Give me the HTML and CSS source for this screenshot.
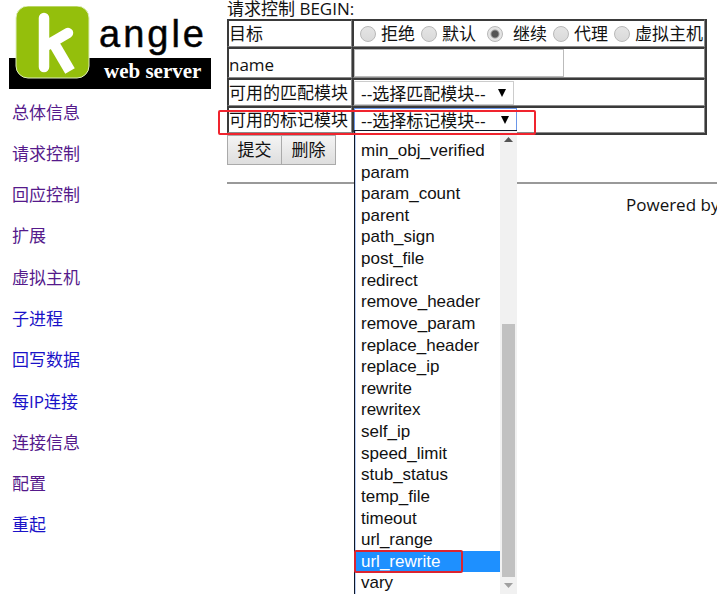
FILE: index.html
```html
<!DOCTYPE html>
<html lang="zh-CN">
<head>
<meta charset="utf-8">
<title>kangle web server</title>
<link rel="stylesheet" href="styles.css">
</head>
<body>
<div class="page">
  <aside class="sidebar">
    <svg class="logo" viewBox="0 0 202 84" role="img" aria-label="kangle web server">
      <rect x="0" y="52" width="202" height="31" fill="#000"/>
      <rect x="7" y="0" width="73" height="72" rx="12" fill="#94bf0c" stroke="#dfeebb"/>
      <path d="M35 12V61M35 41L59 27" fill="none" stroke="#fff" stroke-width="10.500" stroke-linecap="round"/>
      <path d="M44 36L61 65" fill="none" stroke="#fff" stroke-width="11"/>
      <text class="logo-name" x="90" y="41">angle</text>
      <text class="logo-tag" x="95" y="72">web server</text>
    </svg>
    <nav class="nav">
      <a class="visited" href="#info">总体信息</a>
      <a class="visited" href="#request">请求控制</a>
      <a class="visited" href="#response">回应控制</a>
      <a class="visited" href="#extend">扩展</a>
      <a class="visited" href="#vhost">虚拟主机</a>
      <a href="#process">子进程</a>
      <a href="#writeback">回写数据</a>
      <a href="#perip">每IP连接</a>
      <a class="visited" href="#connections">连接信息</a>
      <a class="visited" href="#config">配置</a>
      <a href="#restart">重起</a>
    </nav>
  </aside>
  <main class="main">
    <div class="title">请求控制 BEGIN:</div>
    <form>
      <table class="rules">
        <tr class="row-target">
          <td>目标</td>
          <td>
            <div class="radios">
              <label><input type="radio" name="target">拒绝</label>
              <label><input type="radio" name="target">默认</label>
              <label class="current"><input type="radio" name="target" checked>继续</label>
              <label><input type="radio" name="target">代理</label>
              <label><input type="radio" name="target">虚拟主机</label>
            </div>
          </td>
        </tr>
        <tr class="row-name">
          <td><label for="name">name</label></td>
          <td><input class="name" id="name" type="text"></td>
        </tr>
        <tr class="row-match">
          <td><label for="match">可用的匹配模块</label></td>
          <td><div class="picker"><select id="match"><option>--选择匹配模块--</option></select></div></td>
        </tr>
        <tr class="row-mark">
          <td><label for="mark">可用的标记模块</label></td>
          <td>
            <div class="picker open">
              <select id="mark"><option>--选择标记模块--</option></select>
              <div class="menu">
                <ul class="options">
                  <li>min_obj_verified</li>
                  <li>param</li>
                  <li>param_count</li>
                  <li>parent</li>
                  <li>path_sign</li>
                  <li>post_file</li>
                  <li>redirect</li>
                  <li>remove_header</li>
                  <li>remove_param</li>
                  <li>replace_header</li>
                  <li>replace_ip</li>
                  <li>rewrite</li>
                  <li>rewritex</li>
                  <li>self_ip</li>
                  <li>speed_limit</li>
                  <li>stub_status</li>
                  <li>temp_file</li>
                  <li>timeout</li>
                  <li>url_range</li>
                  <li class="selected">url_rewrite</li>
                  <li>vary</li>
                </ul>
                <div class="scrollbar">
                  <svg viewBox="0 0 17 17"><path d="M4 11L8.500 6L13 11Z" fill="#555"/></svg>
                  <div class="track"><div class="thumb"></div></div>
                  <svg viewBox="0 0 17 17"><path d="M4 6L8.500 11L13 6Z" fill="#a0a0a0"/></svg>
                </div>
              </div>
              <div class="mark-row"></div>
            </div>
          </td>
        </tr>
      </table>
      <div class="buttons"><button type="button">提交</button><button type="button">删除</button></div>
    </form>
    <hr>
    <footer>Powered by</footer>
  </main>
</div>
</body>
</html>
```
FILE: styles.css
```css
* { box-sizing: border-box; }

body {
  margin: 0;
  background: #fff;
  color: #111;
  font: 17px/24px "Open Sans", "Noto Sans CJK SC", sans-serif;
}

.page {
  display: flex;
  min-height: 100vh;
  overflow: clip;
}

.sidebar {
  flex: none;
  width: 227px;
  padding: 6px 0 0 9px;
}

.logo {
  display: block;
  width: 202px;
  height: 84px;
}

.logo-name {
  font: 38px "Liberation Sans", sans-serif;
  letter-spacing: 3px;
  stroke: #111;
  stroke-width: 0.5px;
}

.logo-tag {
  font: bold 21px "Liberation Serif", serif;
  fill: #fff;
}

.nav {
  display: grid;
  grid-auto-rows: 1fr;
  align-items: center;
  height: 454px;
  margin-top: 2px;
  padding-left: 3px;
}

a {
  color: #1a12c8;
  text-decoration: none;
}

a.visited { color: #551a8b; }

.main {
  flex: 1;
  min-width: 0;
}

.title {
  height: 19px;
  line-height: 18px;
  white-space: nowrap;
}

.rules {
  border: solid #3a3a3a;
  border-width: 0 2px 2px 0;
  border-spacing: 0;
}

td {
  padding: 0;
  border: solid #3a3a3a;
  border-width: 2px 1px 1px 2px;
  border-right-color: #8a8a8a;
  border-bottom-color: #8a8a8a;
  line-height: 25px;
  white-space: nowrap;
}

td:first-child { width: 125px; }
td:last-child { width: 353px; }

.row-target { height: 28px; }
.row-name { height: 31px; }
.row-name td:first-child { padding-top: 2px; }
.row-match { height: 28px; }
.row-mark { height: 27px; }
.row-mark td { line-height: 24px; }

.radios {
  display: flex;
  gap: 6px;
  padding-left: 6px;
}

.radios label {
  display: flex;
  align-items: center;
  gap: 5px;
}

.radios .current {
  gap: 10px;
  padding-left: 5px;
}

input[type="radio"] {
  appearance: none;
  width: 16px;
  height: 16px;
  margin: 0;
  border: 1px solid #b8b8b8;
  border-radius: 50%;
  background: linear-gradient(#e4e4e4, #dadada);
}

input[type="radio"]:checked {
  background: radial-gradient(circle, #555 0 3px, #e4e4e4 5px);
}

.name {
  display: block;
  width: 210px;
  height: 28px;
  border: 1px solid #bbb;
  font: inherit;
}

.picker {
  position: relative;
  width: 160px;
}

.picker.open { width: 163px; }

select {
  appearance: none;
  display: block;
  width: 100%;
  height: 24px;
  padding: 3px 0 0 6px;
  border: 1px solid #ccc;
  border-radius: 0;
  background: #fff;
  color: #111;
  font: 17px/20px "Liberation Sans", "Noto Sans CJK SC", sans-serif;
}

.open select {
  border-color: #6a96e8;
  outline: none;
}

.picker::after {
  content: "";
  position: absolute;
  top: 8px;
  right: 8px;
  border: solid transparent;
  border-width: 8px 4px 0;
  border-top-color: #000;
}

.menu {
  position: absolute;
  z-index: 1;
  top: 22px;
  left: 0;
  display: flex;
  width: 100%;
  height: 464px;
  border: solid #101828;
  border-width: 1px 0 0 1px;
  background: #fff;
}

.options {
  flex: 1;
  display: grid;
  grid-auto-rows: 1fr;
  align-items: stretch;
  margin: 0;
  padding: 9px 0 0;
  border-left: 1px solid #bcd0f5;
  list-style: none;
  font: 17px/21px "Liberation Sans", sans-serif;
}

.options li { padding-left: 5px; }

.selected {
  position: relative;
  background: #1e90ff;
  color: #fff;
}

.selected::after {
  content: "";
  position: absolute;
  inset: -1px auto -1px -2px;
  width: 105px;
  border: 2px solid #dc2430;
  border-radius: 2px;
}

.scrollbar {
  display: flex;
  flex-direction: column;
  width: 17px;
  background: #f1f1f1;
}

.scrollbar svg {
  flex: none;
  width: 17px;
  height: 17px;
}

.track {
  flex: 1;
  display: flex;
  align-items: flex-end;
  padding: 0 2px;
}

.thumb {
  width: 100%;
  height: 59%;
  background: #c1c1c1;
}

.mark-row {
  position: absolute;
  z-index: 2;
  top: 2px;
  left: -136px;
  width: 318px;
  height: 25px;
  border: 2px solid #f0242e;
  border-radius: 2px;
  pointer-events: none;
}

.buttons { display: flex; }

button {
  width: 55px;
  height: 30px;
  padding: 0;
  border: 1px solid #aaa;
  border-radius: 0;
  background: linear-gradient(#f4f4f4, #dedede);
  color: #111;
  font: inherit;
}

button + button { margin-left: -1px; }

hr {
  height: 2px;
  margin: 17px 0 9px;
  border: 0;
  background: #999;
}

footer {
  padding-left: 399px;
  white-space: nowrap;
}
```
